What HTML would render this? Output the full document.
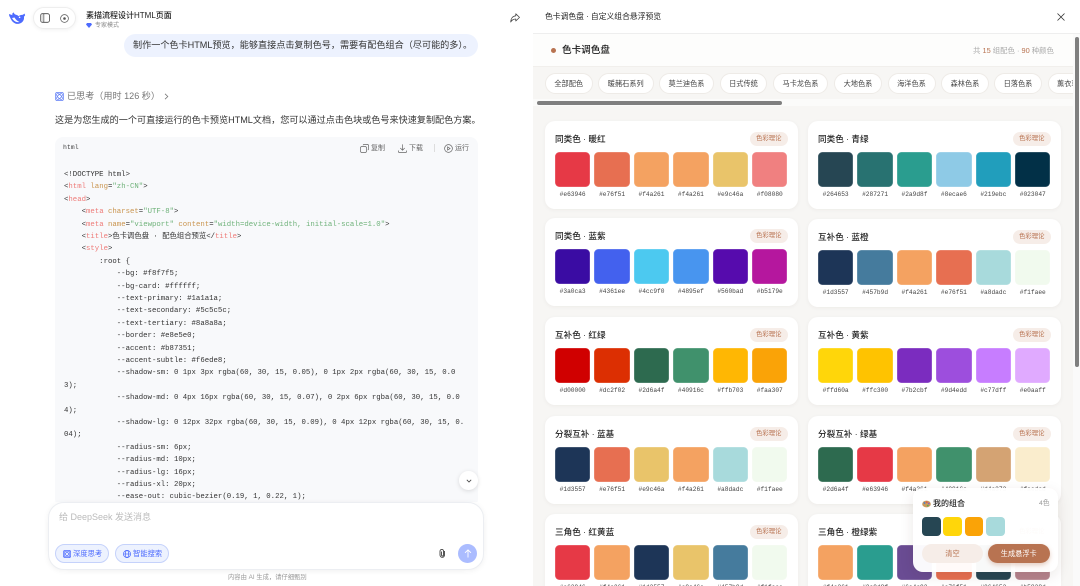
<!DOCTYPE html>
<html lang="zh-CN"><head><meta charset="UTF-8"><title>色卡</title>
<style>
*{box-sizing:border-box;margin:0;padding:0}
html,body{width:1080px;height:586px;overflow:hidden;background:#fff;font-family:"Liberation Sans","Noto Sans CJK SC",sans-serif}
#root{position:relative;width:1080px;height:586px;overflow:hidden;background:#fff}
.a{position:absolute;white-space:nowrap}
svg{position:absolute;overflow:visible}
#code{position:absolute;left:55px;top:137px;width:423px;height:370px;background:#f8f9fb;border-radius:8px}
.l{position:absolute;left:64px;font:7.33px/12px "Liberation Mono","Noto Sans CJK SC",monospace;color:#333;white-space:pre;height:12px}
.t{color:#ee7b78}.k{color:#c9944e}.s{color:#6fb27a}
.card{position:absolute;width:253px;height:88px;background:#fff;border-radius:10px;box-shadow:0 1px 4px rgba(60,30,15,.05)}
.card h3{position:absolute;left:10px;top:12px;font-size:8.6px;line-height:12px;font-weight:500;color:#222;white-space:nowrap}
.card b{position:absolute;left:205px;top:11px;width:37.5px;height:13.5px;border-radius:7px;background:#f6ede8;color:#b87351;font-size:6.4px;line-height:13.5px;font-weight:400;text-align:center}
.g{position:absolute;left:10px;top:31px;width:232.7px;display:grid;grid-template-columns:repeat(6,35.3px);column-gap:4.14px}
.g i{display:block;height:35.3px;border-radius:4.5px;box-shadow:inset 0 0 0 .5px rgba(255,255,255,.3)}
.g span{display:block;text-align:center;font:6.2px/8px "Liberation Mono",monospace;color:#444;margin-top:3.5px;white-space:nowrap}
.p{position:absolute;top:73px;height:21px;border-radius:11px;background:#fff;border:.5px solid #eeebe7;color:#444;font-size:7.2px;line-height:20px;text-align:center;white-space:nowrap}
</style></head><body><div id="root">

<!-- LEFT PANEL -->
<svg style="left:9px;top:12px" width="16" height="13" viewBox="0 0 16 13"><path d="M15.6 1.6c-.3-.1-.5.2-.7.4-.6.6-1.2.9-2 .9-1.3 0-2.300.4-3.200 1.300-.9-1.100-2-1.200-3.100-1.600-.6-.2-1.100-.5-1.400-1.100-.2-.3-.3-.7-.3-1-.4 0-.5.100-.6.300C3 1.500 3 2.400 3.600 3.300 2.300 2.700 1.400 2.400.4 2.100c-.3 0-.4.100-.4.300.1 1.200.5 2 1 2.900.8 1.900 1.600 3.800 3.600 5.200 1.600 1.200 3.400 1.700 5.400 1.300 2.100-.5 3.700-1.700 4.500-3.500.4-.9.600-1.900.5-2.900 0-.4 0-.8.300-1.100.3-.3.700-.6.800-1 .1-.5-.2-.8-.500-1.200z" fill="#4d6bfe"/><path d="M3 6c2 3.500 4.500 4.500 7.500 4-2-.8-3.800-2.200-5-4.500-.6.200-1.700.300-2.500.5z" fill="#fff"/><circle cx="10.600" cy="5.300" r=".8" fill="#fff"/></svg>
<div class="a" style="left:33px;top:7px;width:43px;height:22px;border-radius:11px;background:#fff;border:.5px solid #eee;box-shadow:0 1px 4px rgba(0,0,0,.06)"></div>
<svg style="left:40px;top:13px" width="10" height="10" viewBox="0 0 10 10" fill="none" stroke="#444" stroke-width=".8"><rect x=".5" y=".7" width="9" height="8.600" rx="2"/><path d="M3.800.7v8.600"/><path d="M.8 1.500h2.800v7H.8z" fill="#ddd" stroke="none"/></svg>
<svg style="left:59.500px;top:13.500px" width="9" height="9" viewBox="0 0 9 9" fill="none" stroke="#555" stroke-width=".7"><circle cx="4.500" cy="4.500" r="3.900"/><circle cx="4.500" cy="4.500" r="1.300" fill="#555" stroke="none"/></svg>
<div class="a" style="left:86px;top:10px;font-size:8px;line-height:12px;color:#222;font-weight:500">素描流程设计HTML页面</div>
<svg style="left:86px;top:23px" width="6" height="5" viewBox="0 0 6 5"><path d="M1 0h4l1 1.500L3 5 0 1.500z" fill="#4d6bfe"/></svg>
<div class="a" style="left:95px;top:21.500px;font-size:6px;line-height:8px;color:#8a8a8a">专家模式</div>
<svg style="left:509.500px;top:13px" width="10" height="10" viewBox="0 0 10 10" fill="none" stroke="#444" stroke-width=".8" stroke-linejoin="round"><path d="M5.800.8 9.500 4.400 5.800 8V6C3.500 6 2 6.800.7 9 .8 5.600 2.600 3.100 5.800 2.800z"/></svg>
<div class="a" style="left:124px;top:34px;width:354px;height:23px;border-radius:11.500px;background:#edf2fe"></div>
<div class="a" style="left:133px;top:39px;font-size:9.120px;line-height:12px;color:#333">制作一个色卡HTML预览，能够直接点击复制色号，需要有配色组合（尽可能的多）。</div>

<svg style="left:55px;top:91.500px" width="9" height="9" viewBox="0 0 9 9" fill="none" stroke="#5d7cf5" stroke-width=".7"><rect x=".4" y=".4" width="8.200" height="8.200" rx="1.800"/><ellipse cx="4.500" cy="4.500" rx="3.800" ry="1.700" transform="rotate(45 4.500 4.500)"/><ellipse cx="4.500" cy="4.500" rx="3.800" ry="1.700" transform="rotate(-45 4.500 4.500)"/></svg>
<div class="a" style="left:67px;top:90px;font-size:9.100px;line-height:12px;color:#777">已思考（用时 126 秒）</div>
<svg style="left:164px;top:93px" width="5" height="7" viewBox="0 0 5 7" fill="none" stroke="#777" stroke-width=".8"><path d="M1 .8 3.800 3.500 1 6.200"/></svg>
<div class="a" style="left:55px;top:114px;font-size:9.120px;line-height:12px;color:#333">这是为您生成的一个可直接运行的色卡预览HTML文档，您可以通过点击色块或色号来快速复制配色方案。</div>

<div id="code"></div>
<div class="a" style="left:63px;top:144px;font:6.500px/8px 'Liberation Mono',monospace;color:#444">html</div>
<svg style="left:360px;top:143.500px" width="9" height="9" viewBox="0 0 9 9" fill="none" stroke="#666" stroke-width=".7"><rect x=".5" y="2.500" width="6" height="6" rx="1.500"/><path d="M3 1.200C3.200.7 3.600.4 4.200.4h3c.8 0 1.400.6 1.400 1.400v3c0 .6-.3 1-.8 1.200"/></svg>
<div class="a" style="left:371px;top:144px;font-size:7px;line-height:9px;color:#666">复制</div>
<svg style="left:398px;top:143.500px" width="9" height="9" viewBox="0 0 9 9" fill="none" stroke="#666" stroke-width=".7"><path d="M4.500.4v5.800M2.300 4l2.200 2.200L6.700 4M.4 6.500v1c0 .6.400 1 1 1h6.200c.6 0 1-.4 1-1v-1"/></svg>
<div class="a" style="left:409px;top:144px;font-size:7px;line-height:9px;color:#666">下载</div>
<div class="a" style="left:434px;top:144px;width:.7px;height:8px;background:#ddd"></div>
<svg style="left:443.500px;top:143.500px" width="9" height="9" viewBox="0 0 9 9" fill="none" stroke="#666" stroke-width=".7"><circle cx="4.500" cy="4.500" r="3.900"/><path d="M3.600 2.900v3.200l2.500-1.600z"/></svg>
<div class="a" style="left:455px;top:144px;font-size:7px;line-height:9px;color:#666">运行</div>

<div class="l" style="top:169px">&lt;!DOCTYPE html&gt;</div>
<div class="l" style="top:181.400px">&lt;<span class="t">html</span> <span class="k">lang</span>=<span class="s">"zh-CN"</span>&gt;</div>
<div class="l" style="top:193.800px">&lt;<span class="t">head</span>&gt;</div>
<div class="l" style="top:206.200px">    &lt;<span class="t">meta</span> <span class="k">charset</span>=<span class="s">"UTF-8"</span>&gt;</div>
<div class="l" style="top:218.600px">    &lt;<span class="t">meta</span> <span class="k">name</span>=<span class="s">"viewport"</span> <span class="k">content</span>=<span class="s">"width=device-width, initial-scale=1.0"</span>&gt;</div>
<div class="l" style="top:231px">    &lt;<span class="t">title</span>&gt;色卡调色盘 · 配色组合预览&lt;/<span class="t">title</span>&gt;</div>
<div class="l" style="top:243.400px">    &lt;<span class="t">style</span>&gt;</div>
<div class="l" style="top:255.800px">        :root {</div>
<div class="l" style="top:268.200px">            --bg: #f8f7f5;</div>
<div class="l" style="top:280.600px">            --bg-card: #ffffff;</div>
<div class="l" style="top:293px">            --text-primary: #1a1a1a;</div>
<div class="l" style="top:305.400px">            --text-secondary: #5c5c5c;</div>
<div class="l" style="top:317.800px">            --text-tertiary: #8a8a8a;</div>
<div class="l" style="top:330.200px">            --border: #e8e5e0;</div>
<div class="l" style="top:342.600px">            --accent: #b87351;</div>
<div class="l" style="top:355px">            --accent-subtle: #f6ede8;</div>
<div class="l" style="top:367.400px">            --shadow-sm: 0 1px 3px rgba(60, 30, 15, 0.05), 0 1px 2px rgba(60, 30, 15, 0.0</div>
<div class="l" style="top:379.800px">3);</div>
<div class="l" style="top:392.200px">            --shadow-md: 0 4px 16px rgba(60, 30, 15, 0.07), 0 2px 6px rgba(60, 30, 15, 0.0</div>
<div class="l" style="top:404.600px">4);</div>
<div class="l" style="top:417px">            --shadow-lg: 0 12px 32px rgba(60, 30, 15, 0.09), 0 4px 12px rgba(60, 30, 15, 0.</div>
<div class="l" style="top:429.400px">04);</div>
<div class="l" style="top:441.800px">            --radius-sm: 6px;</div>
<div class="l" style="top:454.200px">            --radius-md: 10px;</div>
<div class="l" style="top:466.600px">            --radius-lg: 16px;</div>
<div class="l" style="top:479px">            --radius-xl: 20px;</div>
<div class="l" style="top:491.400px">            --ease-out: cubic-bezier(0.19, 1, 0.22, 1);</div>

<div class="a" style="left:459px;top:471px;width:18.500px;height:18.500px;border-radius:50%;background:#fff;box-shadow:0 1px 5px rgba(0,0,0,.13)"></div>
<svg style="left:465.500px;top:478.500px" width="6" height="4" viewBox="0 0 6 4" fill="none" stroke="#444" stroke-width=".8"><path d="M.8.800 3 3 5.200.800"/></svg>

<div class="a" style="left:0;top:502px;width:533px;height:84px;background:#fff"></div>
<div class="a" style="left:48px;top:502px;width:436px;height:68px;border-radius:16px;background:#fff;border:.5px solid #eceef2;box-shadow:0 1px 6px rgba(0,0,0,.06)"></div>
<div class="a" style="left:59px;top:511px;font-size:9px;line-height:12px;color:#bbb">给 DeepSeek 发送消息</div>
<div class="a" style="left:55px;top:544px;width:54px;height:19px;border-radius:10px;background:#edf2fe;border:.5px solid #c5d2fb"></div>
<svg style="left:63px;top:549.500px" width="8" height="8" viewBox="0 0 9 9" fill="none" stroke="#4d6bfe" stroke-width=".8"><rect x=".4" y=".4" width="8.200" height="8.200" rx="1.800"/><ellipse cx="4.500" cy="4.500" rx="3.800" ry="1.700" transform="rotate(45 4.500 4.500)"/><ellipse cx="4.500" cy="4.500" rx="3.800" ry="1.700" transform="rotate(-45 4.500 4.500)"/></svg>
<div class="a" style="left:73px;top:549px;font-size:7.300px;line-height:9px;color:#4d6bfe">深度思考</div>
<div class="a" style="left:115px;top:544px;width:54px;height:19px;border-radius:10px;background:#edf2fe;border:.5px solid #c5d2fb"></div>
<svg style="left:122.500px;top:549.500px" width="8" height="8" viewBox="0 0 8 8" fill="none" stroke="#4d6bfe" stroke-width=".7"><circle cx="4" cy="4" r="3.600"/><ellipse cx="4" cy="4" rx="1.700" ry="3.600"/><path d="M.4 4h7.200"/></svg>
<div class="a" style="left:133px;top:549px;font-size:7.300px;line-height:9px;color:#4d6bfe">智能搜索</div>
<svg style="left:438px;top:548px" width="9" height="10" viewBox="0 0 9 10" fill="none" stroke="#444" stroke-width=".9"><path d="M6.500 3v4c0 1.300-1 2.300-2.200 2.300S2 8.300 2 7V3.200C2 2.200 2.800 1.400 3.800 1.400s1.700.8 1.700 1.800V7c0 .5-.4 1-1 1s-1-.5-1-1V3.500"/></svg>
<div class="a" style="left:458px;top:544px;width:19px;height:19px;border-radius:50%;background:#abbcff"></div>
<svg style="left:463.500px;top:549px" width="8" height="9" viewBox="0 0 8 9" fill="none" stroke="#fff" stroke-width=".9"><path d="M4 8.500V1M1 3.800 4 .9 7 3.800"/></svg>
<div class="a" style="left:228px;top:574px;font-size:6.300px;line-height:8px;color:#999">内容由 AI 生成，请仔细甄别</div>
<div class="a" style="left:532.500px;top:0;width:.8px;height:586px;background:#eeeeee"></div>

<!-- RIGHT PANEL -->
<div class="a" style="left:533px;top:0;width:547px;height:586px;background:#f7f6f4;overflow:hidden">
<div class="a" style="left:0;top:0;width:547px;height:34px;background:#fff;border-bottom:.7px solid #eeeeee"></div>
<div class="a" style="left:0;top:34px;width:540px;height:33px;background:#fdfdfc;border-bottom:.7px solid #f1efec"></div>
<div class="a" style="left:0;top:99px;width:540px;height:7px;background:#fbfbfa"></div>
<div class="a" style="left:540px;top:34px;width:7px;height:552px;background:#fafafa"></div>
</div>
<div class="a" style="left:545px;top:11px;font-size:7.800px;line-height:11px;color:#222">色卡调色盘 · 自定义组合悬浮预览</div>
<svg style="left:1057px;top:12.500px" width="8" height="8" viewBox="0 0 8 8" fill="none" stroke="#333" stroke-width=".8"><path d="M.5.500l7 7M7.500.500l-7 7"/></svg>
<div class="a" style="left:551px;top:47.500px;width:5px;height:5px;border-radius:50%;background:#b87351"></div>
<div class="a" style="left:562px;top:44px;font-size:9.600px;line-height:13px;color:#1a1a1a;font-weight:500">色卡调色盘</div>
<div class="a" style="left:973px;top:46px;font-size:7.400px;line-height:9px;color:#aaa">共 <span style="color:#b87351">15</span> 组配色 · <span style="color:#b87351">90</span> 种颜色</div>

<div class="p" style="left:545px;width:47.500px">全部配色</div>
<div class="p" style="left:598px;width:55.500px">暖赭石系列</div>
<div class="p" style="left:659px;width:55px">莫兰迪色系</div>
<div class="p" style="left:720px;width:47px">日式传统</div>
<div class="p" style="left:773px;width:55px">马卡龙色系</div>
<div class="p" style="left:834px;width:48px">大地色系</div>
<div class="p" style="left:887.500px;width:48px">海洋色系</div>
<div class="p" style="left:941px;width:48px">森林色系</div>
<div class="p" style="left:994px;width:48px">日落色系</div>
<div style="position:absolute;left:1048px;top:73px;width:25px;height:21px;overflow:hidden"><div class="p" style="left:0;top:0;width:55px;text-align:left;padding-left:8px">薰衣草色系</div></div>
<div class="a" style="left:537px;top:101px;width:245px;height:3.500px;border-radius:2px;background:#7f7f7f"></div>
<div class="a" style="left:1075px;top:37px;width:3.500px;height:330px;border-radius:2px;background:#7f7f7f"></div>

<div class="card" style="left:545px;top:121px"><h3>同类色 · 暖红</h3><b>色彩理论</b><div class="g">
<div><i style="background:#e63946"></i><span>#e63946</span></div><div><i style="background:#e76f51"></i><span>#e76f51</span></div><div><i style="background:#f4a261"></i><span>#f4a261</span></div><div><i style="background:#f4a261"></i><span>#f4a261</span></div><div><i style="background:#e9c46a"></i><span>#e9c46a</span></div><div><i style="background:#f08080"></i><span>#f08080</span></div></div></div>

<div class="card" style="left:808px;top:121px"><h3>同类色 · 青绿</h3><b>色彩理论</b><div class="g">
<div><i style="background:#264653"></i><span>#264653</span></div><div><i style="background:#287271"></i><span>#287271</span></div><div><i style="background:#2a9d8f"></i><span>#2a9d8f</span></div><div><i style="background:#8ecae6"></i><span>#8ecae6</span></div><div><i style="background:#219ebc"></i><span>#219ebc</span></div><div><i style="background:#023047"></i><span>#023047</span></div></div></div>

<div class="card" style="left:545px;top:218px"><h3>同类色 · 蓝紫</h3><b>色彩理论</b><div class="g">
<div><i style="background:#3a0ca3"></i><span>#3a0ca3</span></div><div><i style="background:#4361ee"></i><span>#4361ee</span></div><div><i style="background:#4cc9f0"></i><span>#4cc9f0</span></div><div><i style="background:#4895ef"></i><span>#4895ef</span></div><div><i style="background:#560bad"></i><span>#560bad</span></div><div><i style="background:#b5179e"></i><span>#b5179e</span></div></div></div>

<div class="card" style="left:808px;top:219px"><h3>互补色 · 蓝橙</h3><b>色彩理论</b><div class="g">
<div><i style="background:#1d3557"></i><span>#1d3557</span></div><div><i style="background:#457b9d"></i><span>#457b9d</span></div><div><i style="background:#f4a261"></i><span>#f4a261</span></div><div><i style="background:#e76f51"></i><span>#e76f51</span></div><div><i style="background:#a8dadc"></i><span>#a8dadc</span></div><div><i style="background:#f1faee"></i><span>#f1faee</span></div></div></div>

<div class="card" style="left:545px;top:317px"><h3>互补色 · 红绿</h3><b>色彩理论</b><div class="g">
<div><i style="background:#d00000"></i><span>#d00000</span></div><div><i style="background:#dc2f02"></i><span>#dc2f02</span></div><div><i style="background:#2d6a4f"></i><span>#2d6a4f</span></div><div><i style="background:#40916c"></i><span>#40916c</span></div><div><i style="background:#ffb703"></i><span>#ffb703</span></div><div><i style="background:#faa307"></i><span>#faa307</span></div></div></div>

<div class="card" style="left:808px;top:317px"><h3>互补色 · 黄紫</h3><b>色彩理论</b><div class="g">
<div><i style="background:#ffd60a"></i><span>#ffd60a</span></div><div><i style="background:#ffc300"></i><span>#ffc300</span></div><div><i style="background:#7b2cbf"></i><span>#7b2cbf</span></div><div><i style="background:#9d4edd"></i><span>#9d4edd</span></div><div><i style="background:#c77dff"></i><span>#c77dff</span></div><div><i style="background:#e0aaff"></i><span>#e0aaff</span></div></div></div>

<div class="card" style="left:545px;top:416px"><h3>分裂互补 · 蓝基</h3><b>色彩理论</b><div class="g">
<div><i style="background:#1d3557"></i><span>#1d3557</span></div><div><i style="background:#e76f51"></i><span>#e76f51</span></div><div><i style="background:#e9c46a"></i><span>#e9c46a</span></div><div><i style="background:#f4a261"></i><span>#f4a261</span></div><div><i style="background:#a8dadc"></i><span>#a8dadc</span></div><div><i style="background:#f1faee"></i><span>#f1faee</span></div></div></div>

<div class="card" style="left:808px;top:416px"><h3>分裂互补 · 绿基</h3><b>色彩理论</b><div class="g">
<div><i style="background:#2d6a4f"></i><span>#2d6a4f</span></div><div><i style="background:#e63946"></i><span>#e63946</span></div><div><i style="background:#f4a261"></i><span>#f4a261</span></div><div><i style="background:#40916c"></i><span>#40916c</span></div><div><i style="background:#d4a373"></i><span>#d4a373</span></div><div><i style="background:#faedcd"></i><span>#faedcd</span></div></div></div>

<div class="card" style="left:545px;top:514px"><h3>三角色 · 红黄蓝</h3><b>色彩理论</b><div class="g">
<div><i style="background:#e63946"></i><span>#e63946</span></div><div><i style="background:#f4a261"></i><span>#f4a261</span></div><div><i style="background:#1d3557"></i><span>#1d3557</span></div><div><i style="background:#e9c46a"></i><span>#e9c46a</span></div><div><i style="background:#457b9d"></i><span>#457b9d</span></div><div><i style="background:#f1faee"></i><span>#f1faee</span></div></div></div>

<div class="card" style="left:808px;top:514px"><h3>三角色 · 橙绿紫</h3><b>色彩理论</b><div class="g">
<div><i style="background:#f4a261"></i><span>#f4a261</span></div><div><i style="background:#2a9d8f"></i><span>#2a9d8f</span></div><div><i style="background:#6a4c93"></i><span>#6a4c93</span></div><div><i style="background:#e76f51"></i><span>#e76f51</span></div><div><i style="background:#264653"></i><span>#264653</span></div><div><i style="background:#b5838d"></i><span>#b5838d</span></div></div></div>

<!-- Floating panel -->
<div class="a" style="left:913px;top:488px;width:145px;height:84px;border-radius:10px;background:rgba(255,255,255,.97);box-shadow:0 4px 14px rgba(60,30,15,.1)"></div>
<svg style="left:921.500px;top:499.500px" width="9" height="8" viewBox="0 0 9 8"><ellipse cx="4.500" cy="4" rx="4.300" ry="3.400" fill="#c99a5b"/><circle cx="2.500" cy="3" r=".9" fill="#3f7fd6"/><circle cx="4.800" cy="2.200" r=".9" fill="#e2574c"/><circle cx="6.800" cy="3.500" r=".9" fill="#8a5bc2"/><circle cx="5.800" cy="5.600" r=".9" fill="#5aa85a"/></svg>
<div class="a" style="left:933px;top:498px;font-size:8px;line-height:11px;color:#222;font-weight:500">我的组合</div>
<div class="a" style="left:1039px;top:499px;font-size:6.800px;line-height:9px;color:#999">4色</div>
<div class="a" style="left:922px;top:517px;width:18.500px;height:18.500px;border-radius:4px;background:#264653"></div>
<div class="a" style="left:943px;top:517px;width:18.500px;height:18.500px;border-radius:4px;background:#ffd60a"></div>
<div class="a" style="left:964.500px;top:517px;width:18.500px;height:18.500px;border-radius:4px;background:#faa307"></div>
<div class="a" style="left:986px;top:517px;width:18.500px;height:18.500px;border-radius:4px;background:#a8dadc"></div>
<div class="a" style="left:922px;top:544px;width:61px;height:19px;border-radius:10px;background:#f6ede8;color:#b87351;font-size:7.200px;line-height:19px;text-align:center">清空</div>
<div class="a" style="left:988px;top:544px;width:61.500px;height:19px;border-radius:10px;background:#b87351;color:#fff;font-size:7.200px;line-height:19px;text-align:center;box-shadow:0 2px 5px rgba(184,115,81,.35)">生成悬浮卡</div>
</div></body></html>
